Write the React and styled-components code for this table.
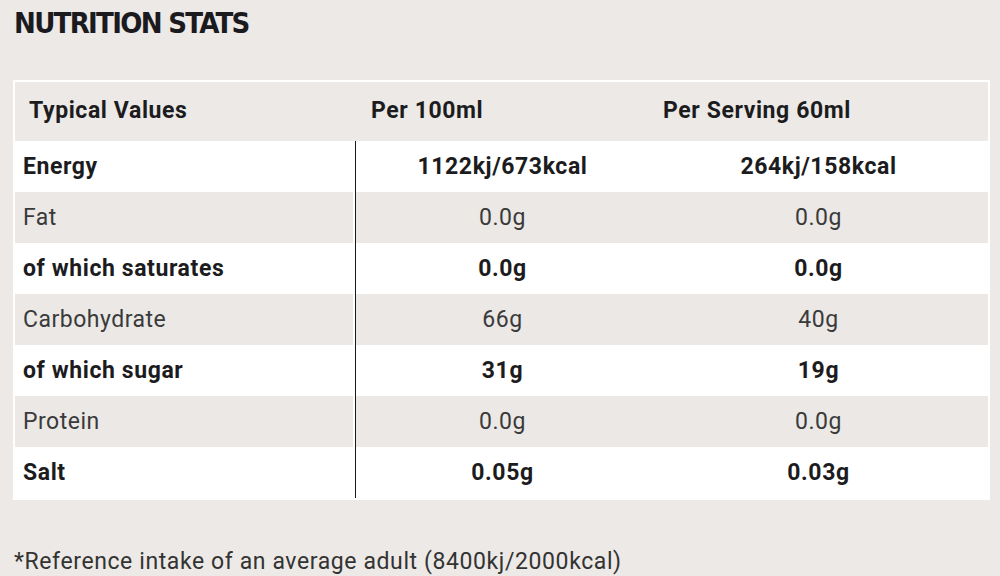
import React from "react";
import styled, { createGlobalStyle } from "styled-components";

const Global = createGlobalStyle`
  html, body { margin: 0; padding: 0; background: #ece9e6; }
  body { font-family: Roboto, "Noto Sans", sans-serif; }
`;

const Page = styled.div`
  width: 1000px;
  height: 576px;
  box-sizing: border-box;
  padding: 5px 10px 0 14px;
  background: #ece9e6;
  overflow: hidden;
`;

const Title = styled.h2`
  margin: 0;
  font-family: "DejaVu Sans Condensed", "DejaVu Sans", sans-serif;
  font-stretch: condensed;
  font-weight: 700;
  font-size: 29px;
  line-height: 36px;
  color: #1b1b1f;
  letter-spacing: -1.7px;
`;

const Table = styled.table`
  margin: 39px 0 0 -1px;
  width: 977px;
  border-collapse: separate;
  border-spacing: 0;
  border: 2px solid #ffffff;
  table-layout: fixed;
`;

const HeadCell = styled.th`
  height: 57px;
  padding: 0 0 2px ${(p) => p.$pad}px;
  background: #ece9e6;
  text-align: left;
  font-size: 23px;
  letter-spacing: 0.6px;
  font-weight: 700;
  color: #1c1c1e;
`;

const Cell = styled.td`
  height: 51px;
  padding: 0 0 0 ${(p) => (p.$first ? 8 : 0)}px;
  background: ${(p) => (p.$shade ? "#ebe8e6" : "#ffffff")};
  text-align: ${(p) => (p.$first ? "left" : "center")};
  font-size: 23px;
  letter-spacing: ${(p) => (p.$bold ? "0.6px" : "0.5px")};
  font-weight: ${(p) => (p.$bold ? 700 : 400)};
  color: ${(p) => (p.$bold ? "#1c1c1e" : "#3a3a3a")};
  border-right: ${(p) => (p.$first ? "2px solid #ffffff" : "none")};
  border-left: ${(p) => (p.$divider ? "1.5px solid #1a1a1a" : "none")};
`;

const Note = styled.p`
  margin: 48px 0 0 0;
  font-size: 23px;
  letter-spacing: 0.6px;
  color: #333333;
  line-height: 28px;
`;

const rows = [
  ["Energy", "1122kj/673kcal", "264kj/158kcal", true],
  ["Fat", "0.0g", "0.0g", false],
  ["of which saturates", "0.0g", "0.0g", true],
  ["Carbohydrate", "66g", "40g", false],
  ["of which sugar", "31g", "19g", true],
  ["Protein", "0.0g", "0.0g", false],
  ["Salt", "0.05g", "0.03g", true],
];

export default function App() {
  return (
    <>
      <Global />
      <Page>
        <Title>NUTRITION STATS</Title>
        <Table>
          <colgroup>
            <col style={{ width: "340px" }} />
            <col style={{ width: "294px" }} />
            <col />
          </colgroup>
          <thead>
            <tr>
              <HeadCell $pad={14}>Typical Values</HeadCell>
              <HeadCell $pad={16}>Per 100ml</HeadCell>
              <HeadCell $pad={14}>Per Serving 60ml</HeadCell>
            </tr>
          </thead>
          <tbody>
            {rows.map(([label, a, b, bold], i) => (
              <tr key={label}>
                <Cell $first $bold={bold} $shade={i % 2 === 1}>
                  {label}
                </Cell>
                <Cell $divider $bold={bold} $shade={i % 2 === 1}>
                  {a}
                </Cell>
                <Cell $bold={bold} $shade={i % 2 === 1}>
                  {b}
                </Cell>
              </tr>
            ))}
          </tbody>
        </Table>
        <Note>*Reference intake of an average adult (8400kj/2000kcal)</Note>
      </Page>
    </>
  );
}
